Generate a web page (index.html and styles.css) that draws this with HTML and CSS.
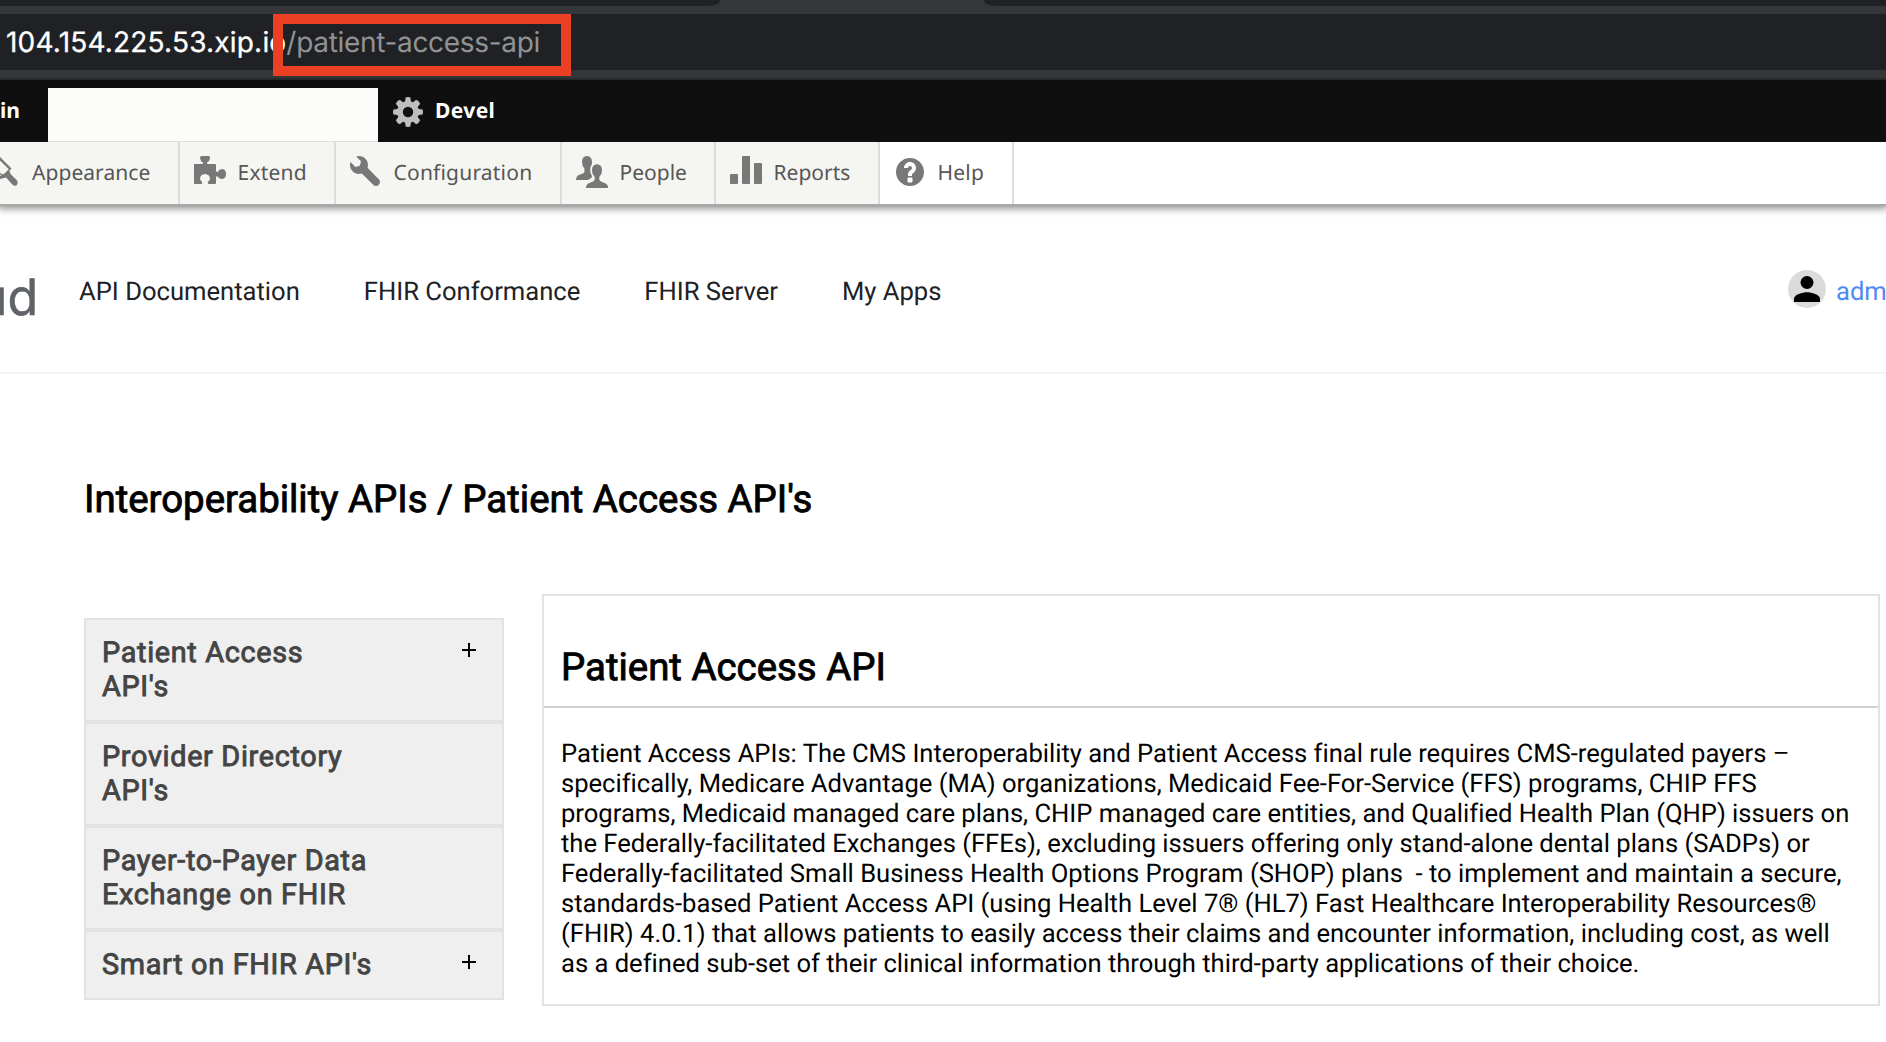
FILE: index.html
```html
<!DOCTYPE html>
<html lang="en">
<head>
<meta charset="utf-8">
<title>Patient Access API</title>
<link rel="stylesheet" href="styles.css">
</head>
<body>
<div class="browser">
  <div class="tabs"><div class="tab tab-left"></div><div class="tab-active"></div><div class="tab tab-right"></div></div>
  <div class="omnibox"><span class="host">104.154.225.53.xip.io</span><span class="path">/patient-access-api</span></div>
  <div class="highlight"></div>
</div>

<div class="toolbar">
  <div class="toolbar-cut">in</div>
  <div class="toolbar-blank"></div>
  <a class="toolbar-item">
    <svg viewBox="0 0 32 32" fill="#bebebe"><path fill-rule="evenodd" d="M13.6 1.4Q16 .4 18.4 1.4L18.9 5.4 21 6.3 24.2 3.8Q27 5 28.2 7.8L25.7 11 26.6 13.1 30.6 13.6Q31.4 16 30.6 18.4L26.6 18.9 25.7 21 28.2 24.2Q27 27 24.2 28.2L21 25.7 18.9 26.6 18.4 30.6Q16 31.4 13.6 30.6L13.1 26.6 11 25.7 7.8 28.2Q5 27 3.8 24.2L6.3 21 5.4 18.9 1.4 18.4Q.6 16 1.4 13.6L5.4 13.1 6.3 11 3.8 7.8Q5 5 7.8 3.8L11 6.3 13.1 5.4ZM16 10.8a5.2 5.2 0 1 0 0 10.4 5.2 5.2 0 0 0 0-10.4Z"/></svg>
    <span>Devel</span>
  </a>
</div>

<nav class="tray">
  <a class="tray-item appearance"><svg viewBox="0 0 32 32"><path d="M6-3 21.5 12.5 14 21 4 14Z"/><path class="cut" d="M6 .5 19 13.5 13.5 19 6 14Z"/><path d="M14.5 17.5 18.6 13.6 20.8 18.2 27.3 24.7Q28.4 27.4 26.7 29.2 24.8 30.6 22.6 28.8L16 21.5 10 23V20Z"/></svg><span>Appearance</span></a>
  <a class="tray-item extend"><svg viewBox="0 0 32 32"><path d="M0 9Q0 8 1 8H8Q9.3 8 9.1 6.6 6 4.8 6.1 1.4 6.2 0 8 0H14Q15.9 0 16 1.4 16 4.8 12.8 6.6 12.7 8 14 8H21Q22 8 22 9V14.5Q22 16.2 23.6 15.9 25.2 13 28.2 13 32 13.4 32 18 32 22.7 28.2 23 25.2 23 23.6 20.4 22 20 22 21.7V27Q22 28 21 28H14.4Q13.3 27 14.2 25.4 16 24.6 16 22.6 15.6 18.3 11 18 6.4 18.3 6 22.6 6 24.6 7.8 25.4 8.7 27 7.6 28H1Q0 28 0 27Z"/></svg><span>Extend</span></a>
  <a class="tray-item configuration"><svg viewBox="0 0 16 16"><path d="M14.416 11.586l-.01-.008v-.001l-5.656-5.656c.15-.449.252-.921.252-1.421 0-2.485-2.016-4.5-4.502-4.5-.505 0-.981.102-1.434.255l2.431 2.431-.588 2.196-2.196.588-2.445-2.445c-.162.464-.268.956-.268 1.475 0 2.486 2.014 4.5 4.5 4.5.5 0 .972-.102 1.421-.251l5.667 5.665c.781.781 2.047.781 2.828 0s.781-2.047 0-2.828z"/></svg><span>Configuration</span></a>
  <a class="tray-item people"><svg viewBox="0 0 32 32"><path d="M0 24Q0 20 3.5 18.7L7.4 17.2Q9 16 8.4 12.4 6 10.4 6 6 6.2.2 11 0 15.8.2 16 6 16 7.4 15.6 8.8 13.6 11 14.2 15 14.6 18 16 20 16.4 22 13.5 23.3L11.8 24Z"/><path d="M10 32Q9.6 28.4 14 26.8L17 25.6Q19.8 24 18.4 20.4 15.8 18.4 16 14 16.2 8.4 21 8.2 25.8 8.4 26 14 26 18.4 23.6 20.4 22.2 24 25 25.6L28 26.8Q32.4 28.4 32 32Z"/></svg><span>People</span></a>
  <a class="tray-item reports"><svg viewBox="0 0 32 32"><rect y="18" width="8" height="10" rx="1"/><rect x="12" width="8" height="28" rx="1"/><rect x="24" y="7" width="8" height="21" rx="1"/></svg><span>Reports</span></a>
  <a class="tray-item help"><svg viewBox="0 0 16 16"><path d="M8.002 1c-3.868 0-7.002 3.134-7.002 7s3.134 7 7.002 7c3.865 0 7-3.134 7-7s-3.135-7-7-7zm3 5c0 .551-.16 1.085-.477 1.586l-.158.22c-.07.093-.189.241-.361.393-.168.148-.35.299-.545.447l-.203.189-.141.129-.096.17-.021.235v.63h-2.001v-.704c.026-.396.078-.73.204-.999.125-.269.271-.498.439-.688l.225-.21-.01-.015.176-.14.137-.128c.186-.139.357-.277.516-.417l.148-.18c.098-.152.168-.323.168-.518 0-.552-.447-1-1.001-1s-1.002.448-1.002 1h-2c0-1.657 1.343-3 3.002-3 1.656 0 3 1.343 3 3zm-1.75 6.619c0 .344-.281.625-.625.625h-1.25c-.345 0-.626-.281-.626-.625v-1.238c0-.344.281-.625.626-.625h1.25c.344 0 .625.281.625.625v1.238z"/></svg><span>Help</span></a>
</nav>

<header class="site-header">
  <div class="logo">ud</div>
  <nav class="menu"><a>API Documentation</a><a>FHIR Conformance</a><a>FHIR Server</a><a>My Apps</a></nav>
  <div class="user">
    <svg viewBox="0 0 38 38"><circle cx="19" cy="19" r="19" fill="#dbdbdb"/><circle cx="19" cy="12.5" r="6.5"/><path d="M6 32V28.8C6 24.4 14.6 22.2 19 22.2S32 24.4 32 28.8V32Z"/></svg>
    <span>adm</span>
  </div>
</header>

<main>
  <h1>Interoperability APIs / Patient Access API's</h1>
  <div class="columns">
    <aside>
      <div class="side-item"><span>Patient Access<br>API's</span><i class="plus"></i></div>
      <div class="side-item"><span>Provider Directory<br>API's</span></div>
      <div class="side-item"><span>Payer-to-Payer Data<br>Exchange on FHIR</span></div>
      <div class="side-item"><span>Smart on FHIR API's</span><i class="plus"></i></div>
    </aside>
    <article>
      <h2>Patient Access API</h2>
      <p>Patient Access APIs: The CMS Interoperability and Patient Access final rule requires CMS-regulated payers –<br>
      specifically, Medicare Advantage (MA) organizations, Medicaid Fee-For-Service (FFS) programs, CHIP FFS<br>
      programs, Medicaid managed care plans, CHIP managed care entities, and Qualified Health Plan (QHP) issuers on<br>
      the Federally-facilitated Exchanges (FFEs), excluding issuers offering only stand-alone dental plans (SADPs) or<br>
      Federally-facilitated Small Business Health Options Program (SHOP) plans&nbsp; - to implement and maintain a secure,<br>
      standards-based Patient Access API (using Health Level 7® (HL7) Fast Healthcare Interoperability Resources®<br>
      (FHIR) 4.0.1) that allows patients to easily access their claims and encounter information, including cost, as well<br>
      as a defined sub-set of their clinical information through third-party applications of their choice.</p>
    </article>
  </div>
</main>
</body>
</html>
```
FILE: styles.css
```css
* { box-sizing: border-box; }
body {
  margin: 0;
  width: 1886px;
  height: 1042px;
  overflow: hidden;
  background: #fff;
  font-family: Roboto, sans-serif;
  text-rendering: geometricPrecision;
  white-space: nowrap;
}

/* Browser chrome */
.browser {
  position: relative;
  height: 80px;
  background: #35363a;
  border-bottom: 2px solid #28292a;
}
.tabs { display: flex; height: 6px; margin-bottom: 8px; }
.tab { background: #202124; }
.tab-left { width: 720px; border-bottom-right-radius: 12px 6px; }
.tab-active { width: 264px; }
.tab-right { flex: 1; border-bottom-left-radius: 12px 6px; }
.omnibox {
  height: 56px;
  padding-left: 6px;
  background: #202124;
  font: 28px/56px Inter, sans-serif;
}
.host { color: #fff; letter-spacing: .2px; -webkit-text-stroke: .3px #fff; }
.path { color: #919294; letter-spacing: -.32px; }
.highlight {
  position: absolute;
  left: 273px;
  top: 14px;
  width: 298px;
  height: 62px;
  border: 10px solid #ec4025;
}

/* Admin toolbar */
.toolbar {
  display: flex;
  height: 62px;
  background: #0f0f0f;
  color: #fff;
  font: 700 21px/30px "Noto Sans", sans-serif;
}
.toolbar-cut { width: 48px; padding-top: 16px; }
.toolbar-blank { width: 330px; margin-top: 8px; background: #fcfdfb; border-bottom: 1px solid #dedede; }
.toolbar-item {
  display: flex;
  align-items: center;
  gap: 11px;
  padding: 0 0 2px 14px;
  letter-spacing: .4px;
}
.toolbar-item svg { width: 32px; height: 32px; margin-top: 4px; }
.toolbar-item span, .tray-item span { padding-top: 2px; }

.tray {
  position: relative;
  display: flex;
  height: 62px;
  background: #fff;
  box-shadow: 0 2px 0 #a9a9a9, 0 2px 8px 2px rgba(0, 0, 0, .5);
  clip-path: inset(0 0 -14px 0);
  color: #565656;
  font: 21px/30px "Noto Sans", sans-serif;
}
.tray-item {
  display: flex;
  flex: none;
  align-items: center;
  gap: 11.5px;
  padding: 0 0 2px 14px;
  border-right: 2px solid #dcdcdc;
  background: #f5f5f2;
  letter-spacing: .2px;
}
.tray-item svg { flex: none; width: 32px; height: 32px; fill: #787878; }
.tray-item .cut { fill: #f5f5f2; }
.appearance { gap: 10px; width: 204px; margin-left: -24px; letter-spacing: .05px; }
.extend { width: 156px; }
.configuration { width: 226px; }
.people { width: 154px; letter-spacing: 0; }
.reports { width: 164px; letter-spacing: 0; }
.help { width: 134px; background: #fff; }

/* Site header */
.site-header {
  display: flex;
  height: 170px;
  border-bottom: 2px solid #f5f5f5;
  color: #202124;
  font-size: 25.6px;
  line-height: 30px;
}
.logo {
  display: flex;
  justify-content: flex-end;
  width: 38px;
  margin-right: 41px;
  padding-top: 68px;
  color: #5f6368;
  font: 50px/52px Inter, sans-serif;
  -webkit-text-stroke: .6px #5f6368;
}
.menu { display: flex; gap: 64px; padding-top: 73px; }
.user {
  display: flex;
  gap: 10px;
  width: 98px;
  margin-left: auto;
  padding-top: 66px;
  color: #4f8af4;
  overflow: hidden;
}
.user svg { flex: none; width: 38px; height: 38px; }
.user span { padding-top: 7px; }

/* Page content */
h1, h2 { margin: 0; font-size: 38.4px; font-weight: 400; line-height: 46px; -webkit-text-stroke: .9px #000; }
h1 { padding: 103px 0 71px 84px; }
.columns { display: flex; align-items: flex-start; }
aside { width: 420px; margin: 24px 38px 0 84px; }
.side-item {
  display: flex;
  justify-content: space-between;
  padding: 16px 26px 16px 16px;
  border: 2px solid #e2e2e2;
  background: #efefef;
  color: #444;
  font-size: 28.8px;
  line-height: 34px;
  letter-spacing: .68px;
  -webkit-text-stroke: .9px #444;
}
.plus {
  width: 14px;
  height: 14px;
  margin-top: 7px;
  background:
    linear-gradient(#000, #000) center / 14px 2px no-repeat,
    linear-gradient(#000, #000) center / 2px 14px no-repeat;
}
article { width: 1338px; border: 2px solid #e2e2e2; }
h2 { padding: 49px 0 15px 17px; border-bottom: 2px solid #d0d0d0; }
p { margin: 0; padding: 31px 0 25px 17px; font-size: 25.6px; line-height: 30px; letter-spacing: -.01px; }
```
